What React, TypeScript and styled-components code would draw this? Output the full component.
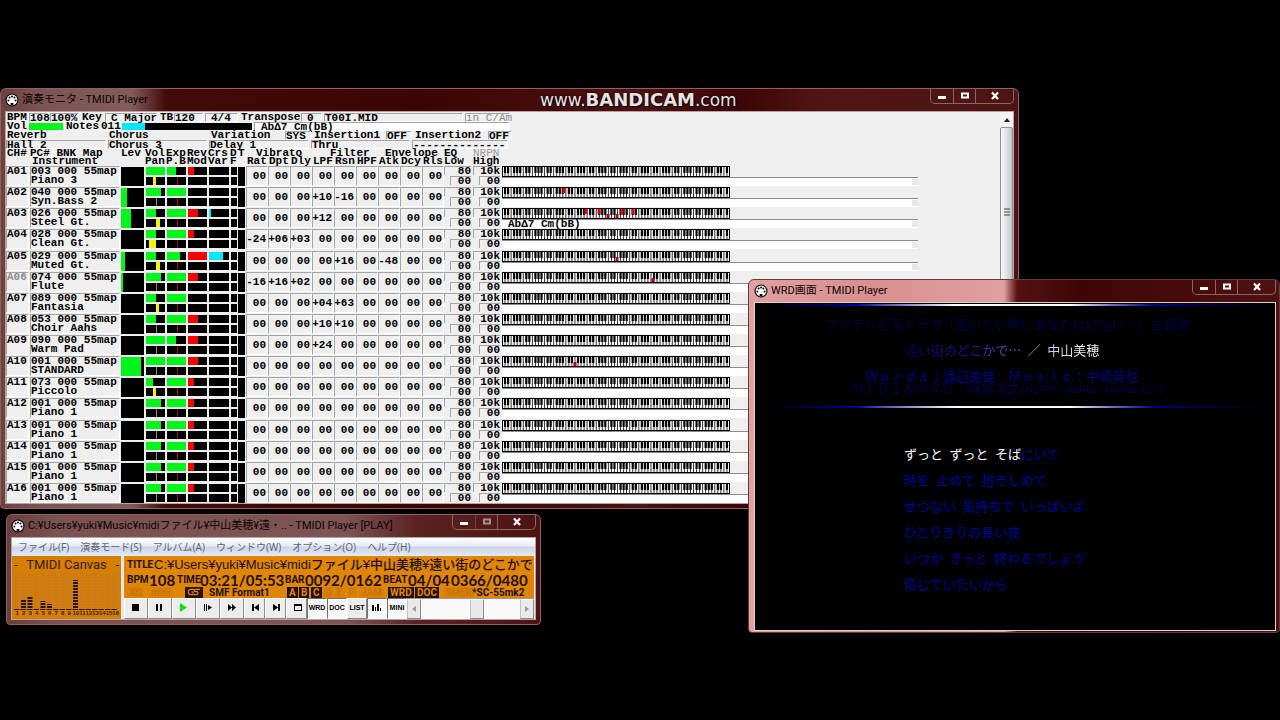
import React from "react";
import styled, { createGlobalStyle, css } from "styled-components";

const MONO = '"Liberation Mono", "DejaVu Sans Mono", monospace';
const UI = '"Noto Sans", "Noto Sans CJK JP", sans-serif';
const JP = '"Noto Sans CJK JP", sans-serif';

const Global = createGlobalStyle`
  * { box-sizing: border-box; }
  body { margin: 0; background: #000; }
  button { font: inherit; color: inherit; padding: 0; margin: 0; border: 0; background: none; }
`;

const Desktop = styled.main`
  position: relative;
  min-height: 100vh;
  overflow: hidden;
  background: #000;
  font-family: ${UI};
`;

/* ---------- window chrome ---------- */

const Frame = styled.section<{ $skin: string; $edge?: string }>`
  position: absolute;
  display: flex;
  flex-direction: column;
  padding: 0 4px 4px;
  border: 1px solid ${(p) => p.$edge ?? "#8d6262"};
  border-radius: 6px 6px 4px 4px;
  background: ${(p) => p.$skin};
`;

const MonitorFrame = styled(Frame)`
  left: 0;
  top: 88px;
  width: calc(100% - 261px);
  min-width: 940px;
`;

const PlayerFrame = styled(Frame)`
  left: 6px;
  top: 514px;
  width: 535px;
`;

const WrdFrame = styled(Frame)`
  right: 0;
  top: 279px;
  width: 532px;
  padding: 0 3px 1px 5px;
`;

const TitleBar = styled.header`
  display: flex;
  align-items: center;
  height: 22px;
  gap: 3px;
`;

const Title = styled.h1`
  flex: 1;
  margin: 0;
  font-family: Roboto, ${JP};
  font-size: 11px;
  line-height: 16px;
  font-weight: 400;
  color: #0a0404;
  white-space: nowrap;
`;

const Captions = styled.div`
  display: flex;
  align-self: flex-start;
  height: 15px;
  border: 1px solid #8b6464;
  border-top: 0;
  border-radius: 0 0 5px 5px;
`;

const CaptionButton = styled.button<{ $wide?: boolean; $dim?: boolean }>`
  display: flex;
  align-items: center;
  justify-content: center;
  width: ${(p) => (p.$wide ? 38 : 22)}px;
  opacity: ${(p) => (p.$dim ? 0.5 : 1)};
  & + & { border-left: 1px solid #8b6464; }
`;

const Client = styled.div<{ $bg?: string }>`
  border: 1px solid #b7a3a3;
  background: ${(p) => p.$bg ?? "#efefef"};
`;

const MidiIcon = () => (
  <svg width="14" height="14" viewBox="0 0 14 14" aria-hidden="true">
    <circle cx="7" cy="7" r="6.5" fill="#000" />
    <circle cx="7" cy="7" r="5.4" fill="#fff" />
    <g fill="#000">
      <circle cx="3.4" cy="7.4" r="1" />
      <circle cx="4.6" cy="4.6" r="1" />
      <circle cx="7" cy="3.4" r="1" />
      <circle cx="9.4" cy="4.6" r="1" />
      <circle cx="10.6" cy="7.4" r="1" />
      <rect x="5.6" y="10" width="2.8" height="2.4" />
    </g>
  </svg>
);

const WindowButtons = ({ dimMax }: { dimMax?: boolean }) => (
  <Captions>
    <CaptionButton aria-label="Minimize">
      <svg width="10" height="10" viewBox="0 0 10 10"><rect x="1" y="5" width="8" height="3" fill="#fff" /></svg>
    </CaptionButton>
    <CaptionButton aria-label="Maximize" $dim={dimMax}>
      <svg width="10" height="10" viewBox="0 0 10 10"><rect x="2" y="2.5" width="6" height="4" fill="none" stroke="#fff" strokeWidth="2" /></svg>
    </CaptionButton>
    <CaptionButton aria-label="Close" $wide>
      <svg width="10" height="10" viewBox="0 0 10 10"><path d="M2 1.5 8 8M8 1.5 2 8" stroke="#fff" strokeWidth="2.2" /></svg>
    </CaptionButton>
  </Captions>
);

/* ---------- monitor window ---------- */

const MonitorBody = styled(Client)`
  display: flex;
  font-family: ${MONO};
  font-size: 11px;
  line-height: 9px;
  font-weight: 700;
  color: #000;
`;

const MonitorPane = styled.div`
  flex: 1;
  min-width: 0;
  padding-top: 1px;
`;

const InfoRow = styled.div<{ $cols: string }>`
  display: grid;
  grid-template-columns: ${(p) => p.$cols};
  height: 9px;
  white-space: pre;
`;

const sunken = css`
  border: 1px solid;
  border-color: #a4a4a4 #fff #fff #a4a4a4;
`;

const Label = styled.span<{ $indent?: number }>`
  padding-left: ${(p) => p.$indent ?? 1}px;
`;

const Field = styled.span<{ $indent?: number; $white?: boolean; $dim?: boolean }>`
  ${sunken}
  height: 9px;
  margin-right: 2px;
  padding-left: ${(p) => p.$indent ?? 0}px;
  line-height: 8px;
  background: ${(p) => (p.$white ? "#fff" : "transparent")};
  color: ${(p) => (p.$dim ? "#8a8a8a" : "#000")};
  font-weight: ${(p) => (p.$dim ? 400 : 700)};
`;

const Gauge = styled.span<{ $bg: string }>`
  height: 7px;
  margin-top: 1px;
  background: ${(p) => p.$bg};
`;

const ChannelTable = styled.table`
  table-layout: fixed;
  width: 912px;
  height: 354px;
  border-collapse: collapse;
  th, td { padding: 0; text-align: left; vertical-align: top; font-weight: 700; white-space: pre; }
  thead tr { height: 8px; }
  thead th { line-height: 8px; height: 8px; }
  tbody tr { height: 21px; }
`;

const Head = styled.th<{ $indent?: number; $dim?: boolean }>`
  && {
    padding-left: ${(p) => p.$indent ?? 0}px;
    color: ${(p) => (p.$dim ? "#9a9a9a" : "#000")};
    font-weight: ${(p) => (p.$dim ? 400 : 700)};
  }
`;

const Box = styled.div<{ $dim?: boolean }>`
  ${sunken}
  height: 20px;
  margin: 1px 1px 0 0;
  color: ${(p) => (p.$dim ? "#8d8d8d" : "#000")};
`;

const Value = styled(Box)`
  display: flex;
  justify-content: flex-end;
  margin-right: 0;
  padding-right: 1px;
  line-height: 18px;
`;

const Level = styled.div`
  height: 19px;
  margin: 2px 1px 0 0;
  background: #000;
`;

const Fill = styled.div<{ $color: string }>`
  height: 100%;
  background: ${(p) => p.$color};
`;

const Meters = styled.div`
  display: flex;
  flex-direction: column;
  gap: 2px;
  margin: 2px 1px 0 1px;
`;

const Meter = styled.div`
  height: 8px;
  background: #000;
`;

const EqBox = styled.div<{ $short?: boolean }>`
  border: solid #a4a4a4;
  border-width: 1px 0 0 1px;
  height: 9px;
  margin: 1px 2px 0 ${(p) => (p.$short ? 6 : 0)}px;
  line-height: 8px;
  text-align: right;
`;

const KeyText = styled.div`
  display: flex;
  align-items: center;
  height: 9px;
  border-top: 1px solid #8c8c8c;
  background: #fff;
  padding-left: 6px;
  &::after { content: ""; width: 6px; height: 6px; margin-left: auto; background: #e9e9e9; }
`;

const KEY = 228 / 75;
const whiteLines = Array.from({ length: 74 }, (_, i) => `M${((i + 1) * KEY).toFixed(2)} 1V10`).join("");
const blackKeys = Array.from({ length: 74 }, (_, i) => i + 1)
  .filter((i) => [1, 2, 4, 5, 6].includes(i % 7))
  .map((i) => `M${(i * KEY - 1.1).toFixed(2)} 0h2.2v7h-2.2z`)
  .join("");

type Note = [x: number, white: boolean];

const KeyboardSvg = styled.svg`
  display: block;
`;

const Keyboard = ({ notes }: { notes?: Note[] }) => (
  <KeyboardSvg width="228" height="11" viewBox="0 0 228 11" aria-hidden="true">
    <rect width="228" height="11" fill="#fff" />
    <path d={whiteLines} stroke="#1c1c1c" strokeWidth="0.9" />
    <path d={blackKeys} fill="#000" />
    {notes?.map(([x, white]) => (
      <rect key={x} x={x - 1.5} y={white ? 6 : 1} width="3" height={white ? 4 : 5} fill={white ? "#b40018" : "#e00010"} />
    ))}
    <rect x="0.5" y="0.5" width="227" height="10" fill="none" stroke="#000" />
  </KeyboardSvg>
);

const KeyCell = styled.div`
  margin-top: 1px;
`;

interface Channel {
  ch: string; pc: string; name: string; lev?: number; vol: number; exp: number; rev?: number; crs?: number;
  pan?: [number, number]; vals?: Record<number, string>; notes?: Note[]; chord?: string; off?: boolean;
}

const channels: Channel[] = [
  { ch: "A01", pc: "003", name: "Piano 3", vol: 100, exp: 45, rev: 30, pan: [36, 3] },
  { ch: "A02", pc: "040", name: "Syn.Bass 2", lev: 27, vol: 78, exp: 100, vals: { 3: "+10", 4: "-16" }, notes: [[62, false]] },
  { ch: "A03", pc: "026", name: "Steel Gt.", lev: 42, vol: 55, exp: 100, rev: 50, crs: 12, pan: [52, 4], vals: { 3: "+12" },
    notes: [[84, false], [97, false], [106, true], [115, true], [120, false], [131, false]], chord: "AbΔ7 Cm(bB)" },
  { ch: "A04", pc: "028", name: "Clean Gt.", vol: 52, exp: 100, rev: 30, pan: [15, 7], vals: { 0: "-24", 1: "+06", 2: "+03" } },
  { ch: "A05", pc: "029", name: "Muted Gt.", lev: 16, vol: 55, exp: 68, rev: 100, crs: 68, pan: [52, 4], vals: { 4: "+16", 6: "-48" }, notes: [[115, true]] },
  { ch: "A06", pc: "074", name: "Flute", lev: 8, vol: 78, exp: 100, rev: 50, vals: { 0: "-16", 1: "+16", 2: "+02" }, notes: [[151, true]], off: true },
  { ch: "A07", pc: "089", name: "Fantasia", vol: 52, exp: 100, pan: [52, 3], vals: { 3: "+04", 4: "+63" } },
  { ch: "A08", pc: "053", name: "Choir Aahs", vol: 55, exp: 100, rev: 50, vals: { 3: "+10", 4: "+10" } },
  { ch: "A09", pc: "090", name: "Warm Pad", vol: 100, exp: 48, rev: 50, vals: { 3: "+24" } },
  { ch: "A10", pc: "001", name: "STANDARD", lev: 85, vol: 100, exp: 100, rev: 50, notes: [[73, true]] },
  { ch: "A11", pc: "073", name: "Piccolo", vol: 35, exp: 100, rev: 30, pan: [36, 3] },
  ...["A12", "A13", "A14", "A15", "A16"].map((ch) => ({ ch, pc: "001", name: "Piano 1", vol: 78, exp: 100, rev: 30 })),
];

const GREEN = "#00f51a";
const columns = [24, 91, 24, 21, 21, 21, 22, 8, 8, ...Array(9).fill(22), 29, 29, 416];

const bar = (color: string, pct = 0) => <Fill $color={color} style={{ width: `${pct}%` }} />;
const tick = (color: string, left: number, width: number) => (
  <Fill $color={color} style={{ marginLeft: `${left}%`, width }} />
);

const ChannelRow = ({ c }: { c: Channel }) => (
  <tr>
    <td><Box $dim={c.off}>{c.ch}</Box></td>
    <td><Box>{`${c.pc} 000 55map\n${c.name}`}</Box></td>
    <td><Level>{bar(GREEN, c.lev)}</Level></td>
    <td>
      <Meters>
        <Meter>{bar(GREEN, c.vol)}</Meter>
        <Meter>{c.pan ? tick("#fff000", c.pan[0], c.pan[1]) : tick("#95855c", 50, 1)}</Meter>
      </Meters>
    </td>
    <td><Meters><Meter>{bar(GREEN, c.exp)}</Meter><Meter>{tick("#a80c0c", 50, 1)}</Meter></Meters></td>
    <td><Meters><Meter>{bar("#f90000", c.rev)}</Meter><Meter /></Meters></td>
    <td><Meters><Meter>{bar("#00e8ff", c.crs)}</Meter><Meter /></Meters></td>
    <td><Meters><Meter /><Meter /></Meters></td>
    <td><Level /></td>
    {Array.from({ length: 9 }, (_, i) => <td key={i}><Value>{c.vals?.[i] ?? "00"}</Value></td>)}
    <td><EqBox>80</EqBox><EqBox $short>00</EqBox></td>
    <td><EqBox>10k</EqBox><EqBox $short>00</EqBox></td>
    <td>
      <KeyCell><Keyboard notes={c.notes} /></KeyCell>
      <KeyText>{c.chord}</KeyText>
    </td>
  </tr>
);

const VScroll = styled.div`
  display: flex;
  flex-direction: column;
  width: 13px;
  background: #f3f3f3;
`;

const VArrow = styled.button`
  height: 15px;
  display: flex;
  align-items: center;
  justify-content: center;
`;

const VThumb = styled.div`
  display: flex;
  align-items: flex-start;
  justify-content: center;
  flex: 1;
  padding-top: 80px;
  border: 1px solid #8f8f8f;
  border-radius: 2px;
  background: linear-gradient(90deg, #fafafa, #dcdde0 60%, #bfc1c6);
`;

const Watermark = styled.div`
  position: absolute;
  top: 88px;
  left: 540px;
  display: flex;
  align-items: baseline;
  font-family: "DejaVu Sans", sans-serif;
  font-size: 17px;
  line-height: 24px;
  color: #e9e2e2;
  text-shadow: 0 0 2px #000, 1px 1px 1px #000;
  strong { font-size: 18px; font-weight: 700; }
`;

const Monitor = () => (
  <MonitorFrame $skin="linear-gradient(90deg, #6e4040 0, #7d5454 40px, #845c5c 130px, #430a0a 165px, #3c0404 420px, #4d1212 640px, #3d0505 740px, #521515 820px, #4d1414 100%)">
    <TitleBar><MidiIcon /><Title>演奏モニタ - TMIDI Player</Title><WindowButtons /></TitleBar>
    <MonitorBody>
      <MonitorPane>
        <InfoRow $cols="23px 21px 31px 24px 54px 15px 31px 35px 61px 23px 141px 47px">
          <Label>BPM</Label><Field>108</Field><Field>100%</Field><Label>Key</Label>
          <Field $indent={5}>C Major</Field><Label>TB</Label><Field>120</Field>
          <Field $indent={5}>4/4</Field><Label>Transpose</Label><Field $indent={5}>0</Field>
          <Field>T00I.MID</Field><Field $dim>in C/Am</Field>
        </InfoRow>
        <InfoRow $cols="23px 34px 37px 22px 132px 258px">
          <Label>Vol</Label><Gauge $bg={GREEN} /><Label $indent={3}>Notes</Label><Label>011</Label>
          <Gauge $bg="linear-gradient(90deg, #00e8ff 23px, #000 23px, #000 130px, transparent 130px)" />
          <Field $indent={6} $white>AbΔ7 Cm(bB)</Field>
        </InfoRow>
        <InfoRow $cols="102px 102px 75px 28px 73px 28px 74px 26px">
          <Label>Reverb</Label><Label>Chorus</Label><Label>Variation</Label><Field>SYS</Field>
          <Label>Insertion1</Label><Field>OFF</Field><Label>Insertion2</Label><Field>OFF</Field>
        </InfoRow>
        <InfoRow $cols="102px 101px 102px 101px 98px">
          <Field>Hall 2</Field><Field>Chorus 3</Field><Field>Delay 1</Field><Field>Thru</Field><Field>--------------</Field>
        </InfoRow>
        <ChannelTable>
          <colgroup>{columns.map((w, i) => <col key={i} style={{ width: w }} />)}</colgroup>
          <thead>
            <tr>
              <Head $indent={1}>CH#</Head><Head>PC# BNK Map</Head><Head>Lev</Head><Head>Vol</Head><Head>Exp</Head>
              <Head>Rev</Head><Head>Crs</Head><Head>D</Head><Head>T</Head>
              <Head colSpan={3} $indent={10}>Vibrato</Head><Head colSpan={3} $indent={18}>Filter</Head>
              <Head colSpan={3} $indent={7}>Envelope</Head><Head>EQ</Head><Head $dim>NRPN</Head><Head />
            </tr>
            <tr>
              <Head /><Head $indent={2}>Instrument</Head><Head /><Head>Pan</Head><Head>P.B</Head><Head>Mod</Head>
              <Head>Var</Head><Head>F</Head><Head />
              {["Rat", "Dpt", "Dly", "LPF", "Rsn", "HPF", "Atk", "Dcy", "Rls"].map((h) => <Head key={h} $indent={1}>{h}</Head>)}
              <Head>Low</Head><Head>High</Head><Head />
            </tr>
          </thead>
          <tbody>{channels.map((c) => <ChannelRow key={c.ch} c={c} />)}</tbody>
        </ChannelTable>
      </MonitorPane>
      <VScroll>
        <VArrow aria-label="Scroll up"><svg width="6" height="4" viewBox="0 0 6 4"><path d="M0 4 3 0 6 4z" fill="#222" /></svg></VArrow>
        <VThumb><svg width="6" height="8" viewBox="0 0 6 8"><path d="M0 1h6M0 4h6M0 7h6" stroke="#444" /></svg></VThumb>
      </VScroll>
    </MonitorBody>
  </MonitorFrame>
);

/* ---------- player window ---------- */

const Menu = styled.nav`
  display: flex;
  gap: 11px;
  height: 17px;
  padding-left: 6px;
  background: linear-gradient(#fff, #e6ebf6 45%, #cdd6e8 55%, #dfe6f4);
  font-size: 10px;
  line-height: 16px;
  color: #62666e;
  button { white-space: nowrap; }
`;

const PlayerGrid = styled.div`
  display: grid;
  grid-template-columns: 109px minmax(0, 1fr);
  gap: 3px;
  padding: 1px 1px 0 0;
  background: #e8e8e8;
`;

const Canvas = styled.div`
  display: flex;
  flex-direction: column;
  height: 63px;
  padding: 0 2px;
  background: #d47e04;
  color: #3a1c00;
`;

const CanvasTitle = styled.div`
  display: flex;
  justify-content: space-between;
  font-family: Roboto, sans-serif;
  font-size: 13px;
  line-height: 18px;
`;

const Numbers = styled.div`
  display: grid;
  grid-template-columns: repeat(16, 1fr);
  font-family: "Liberation Sans", sans-serif;
  font-size: 6px;
  line-height: 7px;
  font-weight: 700;
  text-align: center;
`;

const Lcd = styled.div`
  display: flex;
  flex-direction: column;
  height: 42px;
  padding: 1px 0 0 3px;
  background: #e08606;
  color: #241000;
`;

const LcdRow = styled.div<{ $h: number }>`
  display: flex;
  align-items: center;
  height: ${(p) => p.$h}px;
  line-height: ${(p) => p.$h}px;
  white-space: nowrap;
`;

const Tag = styled.span<{ $w: number }>`
  flex: none;
  width: ${(p) => p.$w}px;
  font-family: Roboto, sans-serif;
  font-size: 10px;
  font-weight: 700;
`;

const Digits = styled.span<{ $w: number }>`
  flex: none;
  width: ${(p) => p.$w}px;
  font-family: Lato, sans-serif;
  font-size: 15px;
  font-weight: 700;
`;

const Path = styled.span`
  font-family: "Liberation Sans", ${JP};
  font-size: 13px;
  font-weight: 500;
`;

const BadgeRow = styled.div`
  display: grid;
  grid-template-columns: 22px 36px 24px 78px repeat(6, 12px) 29px 27px 28px 29px 1fr;
  align-items: center;
  justify-items: start;
  height: 11px;
  white-space: nowrap;
`;

const Badge = styled.span<{ $tone?: "on" | "ghost" | "plain" }>`
  height: 11px;
  padding: 0 ${(p) => (p.$tone === "plain" ? 0 : 2)}px;
  font-family: Roboto, sans-serif;
  font-size: 10px;
  line-height: 11px;
  font-weight: 700;
  color: ${(p) => (p.$tone === "ghost" ? "#c97406" : p.$tone === "plain" ? "#241000" : "#e08606")};
  background: ${(p) => (p.$tone === "ghost" ? "#da8105" : p.$tone === "plain" ? "none" : "#241000")};
`;

const Tools = styled.div`
  display: flex;
  height: 21px;
  background: #f2f2f2;
`;

const Tool = styled.button<{ $w: number; $down?: boolean; $text?: boolean }>`
  display: flex;
  flex: none;
  align-items: flex-start;
  justify-content: ${(p) => (p.$text ? "center" : "flex-start")};
  width: ${(p) => p.$w}px;
  padding: 4px 0 0 ${(p) => (p.$text ? 0 : 7)}px;
  border: 1px solid;
  border-color: ${(p) => (p.$down ? "#6e6e6e #fff #fff #6e6e6e" : "#fff #8a8a8a #8a8a8a #fff")};
  background: ${(p) => (p.$down ? "#f8f8f8" : "#ececec")};
  font-family: "Liberation Sans", sans-serif;
  font-size: 7px;
  line-height: 9px;
  font-weight: 700;
  color: #000;
`;

const HScroll = styled.div`
  display: flex;
  flex: 1;
  justify-content: space-between;
  background: #f8f8f8;
  border-top: 1px solid #999;
`;

const HPart = styled.button`
  display: flex;
  flex: none;
  align-items: center;
  justify-content: center;
  width: 14px;
  border: 1px solid;
  border-color: #fff #8a8a8a #8a8a8a #c4c4c4;
  background: #e9e9e9;
`;

const HTrack = styled.div`
  display: flex;
  flex: 1;
  justify-content: flex-end;
  padding-right: 36px;
`;

const Glyph = ({ d, fill = "#000" }: { d: string; fill?: string }) => (
  <svg width="10" height="9" viewBox="0 0 10 9" aria-hidden="true"><path d={d} fill={fill} fillRule="evenodd" /></svg>
);

const tools: [string, number, string, string?][] = [
  ["Stop", 24, "M0 1h7v7H0z"],
  ["Pause", 24, "M0 1h2v7H0zM4 1h2v7H4z"],
  ["Play", 24, "M0 0 7 4.5 0 9z", "#10e010"],
  ["Step", 24, "M0 1h1v7H0zM2 1h1v7H2zM4 2 8 4.5 4 7z"],
  ["Fast forward", 24, "M0 1 4 4.5 0 8zM4 1 8 4.5 4 8z"],
  ["Previous", 21, "M0 1h2v7H0zM7 1 2 4.5 7 8z"],
  ["Next", 21, "M5 1h2v7H5zM0 1 5 4.5 0 8z"],
  ["Window", 21, "M0 1h8v7H0zM1 3v4h6V3z"],
];

const spectrum: [number, number][] = [[2, 9], [3, 12], [5, 7], [6, 4], [10, 28]];

const Player = () => (
  <PlayerFrame $skin="linear-gradient(90deg, #6b3f3f 0, #7b5151 50px, #7d5353 340px, #5a2222 410px, #4d1313 100%)">
    <TitleBar>
      <MidiIcon />
      <Title>C:¥Users¥yuki¥Music¥midiファイル¥中山美穂¥遠・.. - TMIDI Player [PLAY]</Title>
      <WindowButtons dimMax />
    </TitleBar>
    <Client>
      <Menu>
        {["ファイル(F)", "演奏モード(S)", "アルバム(A)", "ウィンドウ(W)", "オプション(O)", "ヘルプ(H)"].map((m) => <button key={m}>{m}</button>)}
      </Menu>
      <PlayerGrid>
        <Canvas>
          <CanvasTitle><span>-</span><span>TMIDI Canvas</span><span>-</span></CanvasTitle>
          <svg width="104" height="36" viewBox="0 0 104 36" aria-hidden="true">
            {Array.from({ length: 16 }, (_, i) => (
              <path key={i} d={`M${i * 6.5 + 3} 0V34`} stroke="#c97a1c" strokeWidth="5" strokeDasharray="2 1" />
            ))}
            {spectrum.map(([ch, h]) => (
              <path key={ch} d={`M${(ch - 1) * 6.5 + 3} 34v-${h}`} stroke="#2c1400" strokeWidth="5" strokeDasharray="2 1" />
            ))}
            <path d="M0 35.5H104" stroke="#2c1400" strokeDasharray="5.5 1" />
          </svg>
          <Numbers>{Array.from({ length: 16 }, (_, i) => <span key={i}>{i + 1}</span>)}</Numbers>
        </Canvas>
        <div>
          <Lcd>
            <LcdRow $h={16}>
              <Tag $w={27}>TITLE</Tag>
              <Path>C:¥Users¥yuki¥Music¥midiファイル¥中山美穂¥遠い街のどこかで</Path>
            </LcdRow>
            <LcdRow $h={14}>
              <Tag $w={22}>BPM</Tag><Digits $w={28}>108</Digits>
              <Tag $w={23}>TIME</Tag><Digits $w={85}>03:21/05:53</Digits>
              <Tag $w={20}>BAR</Tag><Digits $w={78}>0092/0162</Digits>
              <Tag $w={25}>BEAT</Tag><Digits $w={43}>04/04</Digits><Digits $w={78}>0366/0480</Digits>
            </LcdRow>
            <BadgeRow>
              <Badge $tone="ghost">XG</Badge><Badge $tone="ghost">midi</Badge>
              <Badge>
                <svg width="14" height="10" viewBox="0 0 16 10" role="img" aria-label="GS">
                  <path d="M8 2H4.500a3 3 0 0 0 0 6H7V5H5M8 8h3.500a2 2 0 0 0 0-3.500H9.500a1.200 1.200 0 0 1 0-2.500H15" fill="none" stroke="#e08606" strokeWidth="1.300" />
                </svg>
              </Badge>
              <Badge $tone="plain">SMF Format1</Badge>
              <Badge>A</Badge><Badge>B</Badge><Badge>C</Badge>
              <Badge $tone="ghost">D</Badge><Badge $tone="ghost">E</Badge><Badge $tone="ghost">F</Badge>
              <Badge $tone="ghost">JAM</Badge>
              <Badge>WRD</Badge><Badge>DOC</Badge>
              <Badge $tone="ghost">SMEK</Badge>
              <Badge $tone="plain">*SC-55mk2</Badge>
            </BadgeRow>
          </Lcd>
          <Tools>
            {tools.map(([name, w, d, fill]) => <Tool key={name} $w={w} aria-label={name}><Glyph d={d} fill={fill} /></Tool>)}
            <Tool $w={20} $down $text>WRD</Tool>
            <Tool $w={20} $down $text>DOC</Tool>
            <Tool $w={20} $text>LIST</Tool>
            <Tool $w={20} $down $text aria-label="Meters"><Glyph d="M0 2h2v6H0zM3 4h1v4H3zM5 1h2v7H5zM8 5h1v3H8z" /></Tool>
            <Tool $w={20} $down $text>MINI</Tool>
            <HScroll>
              <HPart aria-label="Scroll left"><svg width="4" height="6" viewBox="0 0 4 6"><path d="M4 0 0 3 4 6z" fill="#999" /></svg></HPart>
              <HTrack><HPart aria-label="Position" /></HTrack>
              <HPart aria-label="Scroll right"><svg width="4" height="6" viewBox="0 0 4 6"><path d="M0 0 4 3 0 6z" fill="#999" /></svg></HPart>
            </HScroll>
          </Tools>
        </div>
      </PlayerGrid>
    </Client>
  </PlayerFrame>
);

/* ---------- WRD window ---------- */

const Stage = styled(Client)`
  min-height: 329px;
  padding: 1px 12px 0;
  border-color: #ddd0d0;
  font-family: ${JP};
  font-size: 13px;
  line-height: 26px;
`;

const Rule = styled.div`
  height: 2px;
  background: linear-gradient(90deg, #000, #0000a8 18%, #5a5ab4 24%, #fff 38%, #fff 61%, #6a6ac0 70%, #00008c 78%, #000);
`;

const Credits = styled.div`
  display: flex;
  flex-direction: column;
  align-items: center;
  height: 100px;
  padding-top: 5px;
  white-space: pre;
`;

const Credit = styled.p<{ $color: string; $tight?: boolean; $pull?: boolean }>`
  flex: none;
  margin: 0;
  height: ${(p) => (p.$tight ? 12 : 26)}px;
  padding-right: ${(p) => (p.$pull ? 26 : 14)}px;
  color: ${(p) => p.$color};
  small { font: 11px ${MONO}; }
`;

const SongTitle = styled(Credit)`
  color: transparent;
  background: linear-gradient(90deg, #000058, #1a1a96 30%, #5c5cc0 50%, #c8c8e8 65%, #fff 82%);
  -webkit-background-clip: text;
  background-clip: text;
`;

const Lyrics = styled.div`
  padding: 33px 0 0 137px;
  color: #000098;
  white-space: pre;
  p { margin: 0; }
  em { font-style: normal; color: #fff; }
`;

const Wrd = () => (
  <WrdFrame $edge="#6a3a3a" $skin="linear-gradient(90deg, #e2a0a0 0, #d98f8f 120px, #e0a0a0 255px, #541212 268px, #3f0505 330px, #4f1111 100%)">
    <TitleBar><MidiIcon /><Title>WRD画面 - TMIDI Player</Title><WindowButtons /></TitleBar>
    <Stage $bg="#000">
      <Rule />
      <Credits>
        <Credit $color="#000040">フジテレビ系ドラマ「逢いたい時にあなたはいない…」主題歌</Credit>
        <SongTitle $color="#fff" $pull>{"遠い街のどこかで…\u2002／\u2002中山美穂"}</SongTitle>
        <Credit $color="#000080" $tight $pull>Ｗｏｒｄｓ：渡辺美佳　Ｍｕｓｉｃ：中崎英也</Credit>
        <Credit $color="#000048">ＭＩＤＩ＆ＷＲＤ：阿部浩之<small>(NIFTY-SERVE GYM01417)</small></Credit>
      </Credits>
      <Rule />
      <Lyrics>
        <p><em>{"ずっと\u2002ずっと\u2002そば"}</em>にいて</p>
        <p>{"時を\u2002止めて\u2002抱きしめて"}</p>
        <p>{"せつない\u2002気持ちで\u2002いっぱいよ"}</p>
        <p>ひとりきりの長い夜</p>
        <p>{"いつか\u2002きっと\u2002終わるでしょう"}</p>
        <p>信じていたいから</p>
      </Lyrics>
    </Stage>
  </WrdFrame>
);

export default function App() {
  return (
    <Desktop>
      <Global />
      <Monitor />
      <Watermark><span>www.</span><strong>BANDICAM</strong><span>.com</span></Watermark>
      <Player />
      <Wrd />
    </Desktop>
  );
}
